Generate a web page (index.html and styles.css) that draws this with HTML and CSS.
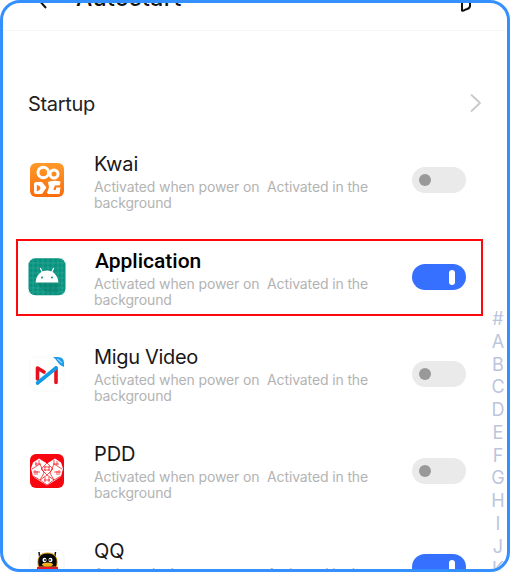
FILE: index.html
```html
<!DOCTYPE html>
<html lang="en">
<head>
<meta charset="utf-8">
<title>Autostart</title>
<link rel="stylesheet" href="styles.css">
</head>
<body>
<main class="frame">
  <header class="topbar">
    <svg class="back" width="12" height="22" viewBox="0 0 12 22"><path d="M10 2 2 12l8 9"/></svg>
    <h1 class="title">Autostart</h1>
    <svg class="tool" width="14" height="14" viewBox="0 0 14 14"><path d="M3 0v12.500q1 .5 3-.7 4.500-1 5-3.500V0"/></svg>
  </header>
  <section class="startup">
    <span class="startup-label">Startup</span>
    <svg width="12" height="20" viewBox="0 0 12 20"><path class="chevron" d="m1.500 2 8.500 8-8.500 8"/></svg>
  </section>
  <div class="list">
    <article class="row">
      <svg class="icon" viewBox="0 0 38 38">
        <defs><linearGradient id="orange" x2="0" y2="1"><stop stop-color="#ff9a28"/><stop offset="1" stop-color="#fb6c0d"/></linearGradient></defs>
        <rect x="2" y="2" width="34" height="34" rx="6" fill="url(#orange)"/>
        <g fill="none" stroke="#fff" stroke-width="3"><circle cx="15.300" cy="11.500" r="5.300"/><circle cx="26" cy="13" r="4"/></g>
        <path d="M6 23q0-2 2-2h6l4.500 5.500L14 33H8q-2 0-2-2z" fill="#fff"/>
        <path d="M8.800 24v6.500l2.700-1.500 1-2-1-2z" fill="#fb7915"/>
        <path d="M20 21q6-2 12.500-.5l-.6 3.700-5 .3-1.500 4.500h2.300l.5-2.500h4.300l-1 6.500H20l-1-1.500 2-5z" fill="#fff"/>
      </svg>
      <div class="copy"><h2 class="name">Kwai</h2><p class="note">Activated when power on&nbsp; Activated in the background</p></div>
      <span class="toggle"></span>
    </article>
    <article class="row selected">
      <svg class="icon" viewBox="0 0 38 38">
        <rect x=".5" y=".2" width="37" height="37" rx="7" fill="#089380"/>
        <path d="M5 .2v37M10 .2v37M15 .2v37M20 .2v37M25 .2v37M30 .2v37M34 .2v37M.5 5h37M.5 10h37M.5 15h37M.5 20h37M.5 25h37M.5 30h37M.5 34h37" stroke="#43ac99" stroke-width=".5"/>
        <path d="m8 24.500 10 10h12l1-11z" fill="#077966" opacity=".4"/>
        <path d="M7.600 24.500c.3-7 5-12 11.400-12s11 5 11.400 12z" fill="#fff"/>
        <path d="m12.500 10.500 2.500 5m10.500-5-2.500 5" stroke="#fff" stroke-width="1.300" stroke-linecap="round"/>
        <circle cx="14" cy="19.500" r="1" fill="#089380"/><circle cx="24" cy="19.500" r="1" fill="#089380"/>
      </svg>
      <div class="copy"><h2 class="name">Application</h2><p class="note">Activated when power on&nbsp; Activated in the background</p></div>
      <span class="toggle on"></span>
    </article>
    <article class="row">
      <svg class="icon" viewBox="0 0 38 38">
        <rect x="2" y="2" width="34" height="34" rx="6" fill="#fff" stroke="#f9f9f9"/>
        <g fill="none" stroke-width="3.600" stroke-linecap="round" stroke-linejoin="round"><path d="M9.500 24V13l6.500 4M28 13v14.500" stroke="#e6111f"/><path d="M9.500 28 28 13" stroke="#139be6"/></g>
        <path d="M25 2h5q6 0 6 6v4q-4-1-6-4.500Q28 4 25 2z" fill="#1d9cea"/>
        <path d="m29.500 4 4.500 4" stroke="#91d4fa" stroke-width="1.200"/>
      </svg>
      <div class="copy"><h2 class="name migu">Migu Video</h2><p class="note">Activated when power on&nbsp; Activated in the background</p></div>
      <span class="toggle"></span>
    </article>
    <article class="row">
      <svg class="icon" viewBox="0 0 38 38">
        <rect x="2" y="2" width="34" height="34" rx="6" fill="#f80510"/>
        <path d="m11 6.500 8 5 8-5 6 4 2 6-2 8-6 4-8 5-8-5-6-4-2-8 2-6z" fill="#fff"/>
        <g fill="none" stroke="#f80510" stroke-width=".7"><path d="m19 11-6 6 6 6 6-6zM4 17l8-5 4 9-4 7-7-4m29-7-8-5-4 9 4 7 7-4M12 28l7-5 7 5-7 5z"/><path d="M8 10v4m3-6v4m15-4v4m3-3v4M7 18v5m2-4v4m20-4v4m2-5v5M17 25v5m4-5v5m-5-2h6M16 15h6m-6 3h6m-5-4v5m4-5v5M5 20h7m14 0h7M7 12h6m12 0h6"/></g>
      </svg>
      <div class="copy"><h2 class="name">PDD</h2><p class="note">Activated when power on&nbsp; Activated in the background</p></div>
      <span class="toggle"></span>
    </article>
    <article class="row">
      <svg class="icon" viewBox="0 0 38 38">
        <rect x="2" y="2" width="34" height="34" rx="6" fill="#fff" stroke="#f4f4f4"/>
        <path d="m11 4 .5 4 3-1m13-3-.5 4-3-1" fill="none" stroke="#111" stroke-width="1.500"/>
        <path d="M10 19.500c-2-9 1-15 9.500-15s11.500 6 9.500 15z" fill="#efa51a"/>
        <path d="M11 18.500c-2-7.500 0-13 8.500-13s10.500 5.500 8.500 13z" fill="#080808"/>
        <ellipse cx="16.500" cy="12" rx="2" ry="2.300" fill="#fff"/><ellipse cx="22.500" cy="12" rx="2" ry="2.300" fill="#fff"/>
        <circle cx="17" cy="12" r=".9"/><circle cx="22" cy="12" r=".9"/>
        <ellipse cx="19.500" cy="16.500" rx="5.500" ry="2" fill="#f6ae19"/>
        <path d="M9 19h21v6H9z" fill="#e71525"/>
      </svg>
      <div class="copy"><h2 class="name">QQ</h2><p class="note">Activated when power on&nbsp; Activated in the background</p></div>
      <span class="toggle on"></span>
    </article>
  </div>
  <nav class="index"><span>#</span><span>A</span><span>B</span><span>C</span><span>D</span><span>E</span><span>F</span><span>G</span><span>H</span><span>I</span><span>J</span><span>K</span></nav>
</main>
</body>
</html>
```
FILE: styles.css
```css
*, *::before, *::after { box-sizing: border-box; }
body { margin: 0; background: #fff; font-family: Inter, "Liberation Sans", sans-serif; }
h1, h2, p { margin: 0; }
.frame { position: relative; width: 510px; height: 572px; border: 3px solid #348fff; border-radius: 20px; overflow: hidden; background: #fff; }
.topbar { display: flex; align-items: flex-end; height: 28px; padding: 0 34px 0 33px; border-bottom: 1px solid #f6f6f6; }
.back { flex: none; margin-bottom: 21px; }
.back path, .tool path { fill: none; stroke: #111; stroke-width: 2; stroke-linejoin: round; }
.title { margin: 0 auto 19px 28px; font-size: 23px; line-height: 26px; font-weight: 500; letter-spacing: .4px; color: #111; }
.tool { flex: none; margin-bottom: 18px; }
.startup { display: flex; align-items: center; justify-content: space-between; height: 101px; margin-top: 20px; padding: 3px 25px 0 25px; }
.startup-label { padding-top: 2px; font-size: 20px; line-height: 26px; letter-spacing: -.3px; color: #222; }
.chevron { fill: none; stroke: #c9c9c9; stroke-width: 1.8; stroke-linecap: round; stroke-linejoin: round; }
.list { margin-top: -20px; }
.row { position: relative; display: grid; grid-template-columns: 38px 284px 54px; column-gap: 28px; height: 96.75px; padding-left: 25px; align-items: center; }
.icon { width: 38px; height: 38px; }
.copy { padding-top: 1px; }
.name { font-size: 20px; line-height: 26px; font-weight: 400; letter-spacing: -.1px; color: #171717; }
.name.migu { letter-spacing: -.32px; }
.note { font-size: 14px; line-height: 16px; letter-spacing: -.13px; color: #b3b3b3; margin-top: 2px; }
.selected .name { padding-left: 1px; font-family: Roboto, sans-serif; font-size: 21px; font-weight: 500; color: #000; letter-spacing: 0; }
.selected::after { content: ""; position: absolute; left: 13px; top: 10px; width: 467px; height: 77px; border: 2px solid #ff080c; }
.toggle { display: flex; align-items: center; width: 54px; height: 26px; margin-left: 6px; padding: 0 7px; border-radius: 13px; background: #eaeaea; }
.toggle::before { content: ""; width: 12px; height: 12px; border-radius: 6px; background: #999; }
.toggle.on { justify-content: flex-end; padding-right: 11px; background: #3670ff; }
.toggle.on::before { width: 6px; height: 15px; border-radius: 3px; background: #fff; }
.index { position: absolute; top: 305px; right: 0; width: 18px; text-align: center; font-size: 18px; color: #bdc5dc; }
.index span { display: block; height: 22.75px; line-height: 22.75px; }
```
